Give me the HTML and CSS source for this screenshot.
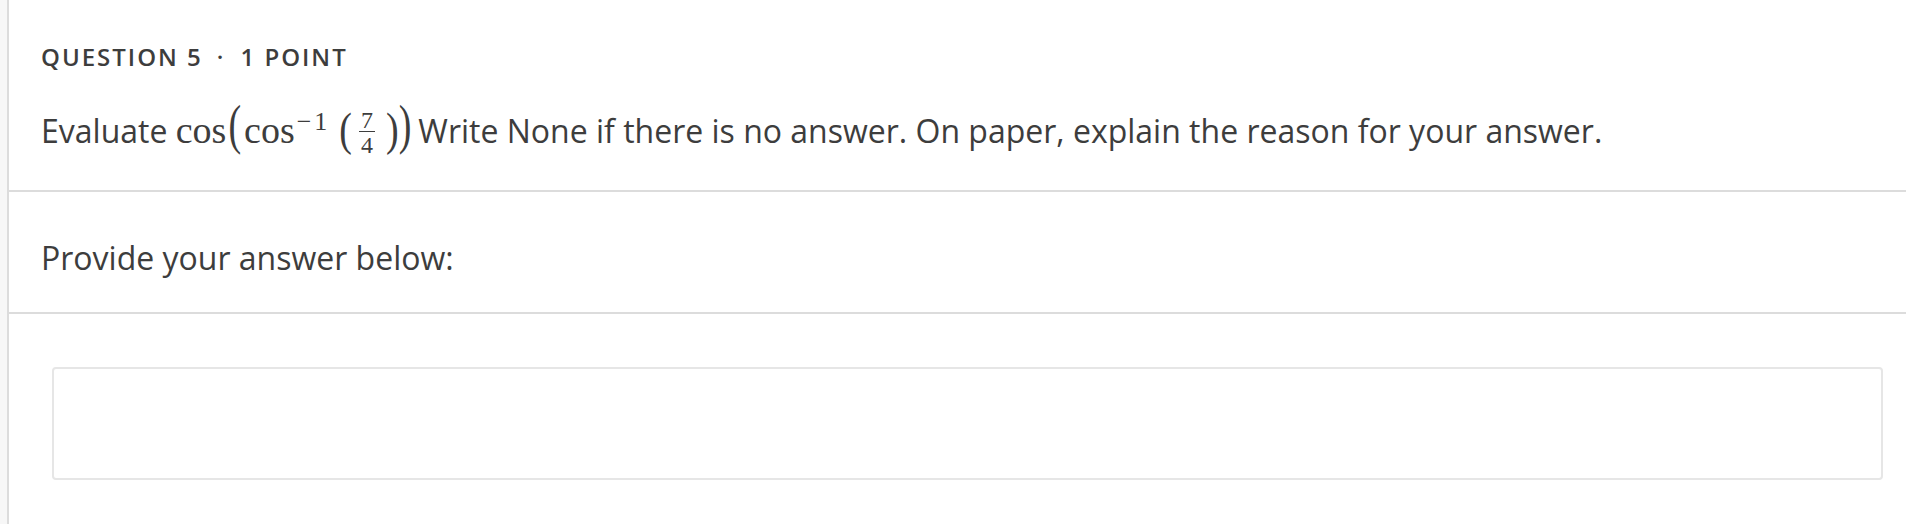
FILE: index.html
```html
<!DOCTYPE html>
<html lang="en">

<head>
    <meta charset="UTF-8" />
    <meta name="viewport" content="width=device-width, initial-scale=1.0" />
    <title>Question 5</title>
    <link rel="stylesheet" href="styles.css">
</head>

<body>
    <div class="page">
        <div class="rail"></div>

        <main class="question">
            <section class="question_head">
                <h2 class="question_title">Question 5<span class="sep">·</span>1 point</h2>
                <p class="question_text">Evaluate <span class="math"><span class="op">cos</span><span class="paren big open">(</span><span class="op">cos</span><span class="sup"><span class="minus">−</span>1</span><span class="paren">(</span><span class="frac"><span class="num">7</span><span class="den">4</span></span><span class="paren">)</span><span class="paren big close">)</span></span>Write None if there is no answer. On paper, explain the reason for your answer.</p>
            </section>

            <section class="question_prompt">
                <p>Provide your answer below:</p>
            </section>

            <section class="question_answer">
                <textarea class="answer_box" aria-label="Answer"></textarea>
            </section>
        </main>
    </div>
</body>

</html>
```

FILE: styles.css
```css
html,
body {
    margin: 0;
    background-color: #fff;
}

body {
    font-family: "Open Sans", "Liberation Sans", sans-serif;
    color: #3d3d3d;
}

.page {
    display: flex;
    min-height: 100vh;
}

.rail {
    width: 7px;
    flex-shrink: 0;
    background-color: #f7f7f7;
    border-right: 2px solid #dcdcdc;
}

.question {
    flex: 1;
}

/* question header + text */
.question_head {
    padding: 41px 32px 35px;
    border-bottom: 2px solid #dcdcdc;
}

.question_title {
    margin: 0 0 35px;
    font-size: 24px;
    line-height: 31px;
    font-weight: 600;
    letter-spacing: 2px;
    text-transform: uppercase;
}

.question_title .sep {
    margin: 0 15px 0 14px;
}

.question_text {
    margin: 0;
    font-size: 32px;
    line-height: 48px;
}

/* math */
.math {
    font-family: "Liberation Serif", "DejaVu Serif", serif;
    font-size: 38px;
    line-height: 0;
    white-space: nowrap;
}

.math .op {
    margin-right: 2px;
}

.math .paren {
    display: inline-block;
    line-height: 38px;
    transform: translateY(-1px) scaleY(1.21);
}

.math .paren.big {
    transform: translateY(-5px) scaleY(1.42);
}

.math .paren.open {
    margin-right: 3px;
}

.math .paren.close {
    margin-right: 7px;
}

.math .sup {
    display: inline-block;
    font-size: 26px;
    line-height: 18px;
    vertical-align: 13px;
    margin: 0 12px 0 0;
}

.math .minus {
    margin-right: 3px;
}

.math .frac {
    display: inline-flex;
    flex-direction: column;
    align-items: center;
    vertical-align: 15px;
    margin: 0 11px 0 7px;
    font-size: 24px;
    line-height: 18px;
}

.math .num {
    padding: 0 2px 2px;
    border-bottom: 1px solid #3d3d3d;
}

.math .den {
    padding-top: 4px;
}

/* prompt */
.question_prompt {
    padding: 42px 32px 30px;
    border-bottom: 2px solid #dcdcdc;
}

.question_prompt p {
    margin: 0;
    font-size: 32px;
    line-height: 48px;
}

/* answer */
.question_answer {
    padding: 53px 23px 40px 43px;
}

.answer_box {
    display: block;
    width: 100%;
    height: 113px;
    box-sizing: border-box;
    border: 2px solid #e6e6e6;
    border-radius: 4px;
    resize: none;
    background-color: #fff;
    font-family: inherit;
    font-size: 24px;
}
```
